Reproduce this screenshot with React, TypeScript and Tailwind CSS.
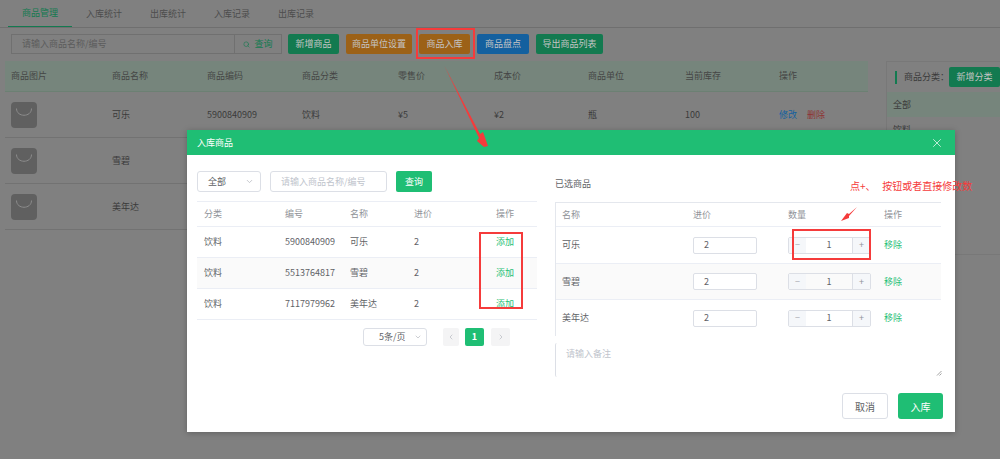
import React from 'react';
import { ChevronDown, ChevronLeft, ChevronRight, Search, X } from 'lucide-react';

const tabs = ['商品管理', '入库统计', '出库统计', '入库记录', '出库记录'];

const products = [
  { name: '可乐', code: '5900840909' },
  { name: '雪碧', code: '5513764817' },
  { name: '美年达', code: '7117979962' },
];

const pageCols = 'grid grid-cols-[101px_95px_95px_96px_96px_94px_97px_94px_1fr] items-center pl-[6px]';
const pickCols = 'grid grid-cols-[81px_65px_64px_82px_1fr] items-center pl-[7px]';
const chosenCols = 'grid grid-cols-[131px_95px_96px_1fr] items-center pl-[6px]';

const BagIcon = () => (
  <svg width="26" height="26" viewBox="0 0 26 26" className="shrink-0">
    <rect width="26" height="26" rx="4" fill="#606060" />
    <path d="M5.5 6.5c0 9 15 9 15 0" fill="none" stroke="#8c8c8c" strokeWidth="1" />
  </svg>
);

const PageBtn = ({ label, color, w }: { label: string; color: string; w: string }) => (
  <button className={`${color} ${w} h-5 rounded-[2px] text-[9px] text-[#c4c4c4]`}>{label}</button>
);

const Stepper = ({ value }: { value: number }) => (
  <div className="flex h-[17px] w-[83px] rounded-[2px] border border-[#dcdfe6] text-[9px] text-[#606266]">
    <span className="flex w-[17px] items-center justify-center bg-[#f5f7fa] text-[#a8abb2]">−</span>
    <span className="flex flex-1 items-center justify-center">{value}</span>
    <span className="flex w-[18px] items-center justify-center border-l border-[#dcdfe6] bg-[#f5f7fa] text-[#909399]">+</span>
  </div>
);

export default function App() {
  return (
    <div className="relative h-[459px] w-[1000px] overflow-hidden bg-[#808080] font-['Noto_Sans_CJK_SC','Liberation_Sans',sans-serif] text-[9px] text-[#3a3a3a]">
      {/* dimmed page */}
      <div className="flex h-[28px] border-b border-[#6f6f6f] pl-[8px]">
        {tabs.map((t, i) => (
          <div
            key={t}
            className={`flex h-[27px] w-[64px] items-center justify-center ${i === 0 ? 'border-b border-[#137a50] text-[#137a50]' : 'text-[#4d4d4d]'}`}
          >
            {t}
          </div>
        ))}
      </div>

      <div className="flex items-center pl-[11px] pt-[6px]">
        <div className="flex h-5 w-[224px] items-center border border-[#707070] pl-[10px] text-[#5c5c5c]">请输入商品名称/编号</div>
        <div className="flex h-5 w-[47px] items-center justify-center gap-1 border border-l-0 border-[#707070] text-[#137a50]">
          <Search size={7} />
          查询
        </div>
        <div className="ml-[6px] flex gap-[7px]">
          <PageBtn label="新增商品" color="bg-[#137a50]" w="w-[51px]" />
          <PageBtn label="商品单位设置" color="bg-[#9c6117]" w="w-[66px]" />
          <PageBtn label="商品入库" color="bg-[#9c6117]" w="w-[51px]" />
          <PageBtn label="商品盘点" color="bg-[#14609f]" w="w-[52px]" />
          <PageBtn label="导出商品列表" color="bg-[#137a50]" w="w-[67px]" />
        </div>
      </div>

      <div className="mt-[7px] flex pl-[5px]">
        <div className="w-[863px]">
          <div className={`${pageCols} h-[31px] border-b border-[#6c8073] bg-[#76857c] text-[#454545]`}>
            {['商品图片', '商品名称', '商品编码', '商品分类', '零售价', '成本价', '商品单位', '当前库存', '操作'].map((h) => (
              <span key={h}>{h}</span>
            ))}
          </div>
          {products.map((p) => (
            <div key={p.code} className={`${pageCols} h-[46px] border-b border-[#727272]`}>
              <BagIcon />
              <span>{p.name}</span>
              <span>{p.code}</span>
              <span>饮料</span>
              <span>¥5</span>
              <span>¥2</span>
              <span>瓶</span>
              <span>100</span>
              <span className="flex gap-[10px]">
                <span className="text-[#14609f]">修改</span>
                <span className="text-[#8f3333]">删除</span>
              </span>
            </div>
          ))}
        </div>

        <div className="ml-[18px] h-[194px] flex-1 border-l border-t border-b border-[#787878]">
          <div className="flex h-[30px] items-center pl-[8px]">
            <span className="h-[13px] w-[2px] bg-[#137a50]" />
            <span className="ml-[7px] flex-1 text-[#3a3a3a]">商品分类：</span>
            <span className="flex h-5 w-[51px] items-center justify-center rounded-[2px] bg-[#137a50] text-[#c4c4c4]">新增分类</span>
          </div>
          <div className="flex h-[25px] items-center bg-[#76857c] pl-[6px]">全部</div>
          <div className="flex h-[25px] items-center pl-[6px]">饮料</div>
        </div>
      </div>

      {/* dialog */}
      <div className="absolute left-[187px] top-[130px] flex h-[302px] w-[768px] flex-col bg-white text-[#606266] shadow-[0_1px_6px_rgba(0,0,0,0.25)]">
        <div className="flex h-[25px] shrink-0 items-center justify-between bg-[#1fbe74] pl-[10px] pr-[11px] text-white">
          入库商品
          <X size={14} strokeWidth={1.2} />
        </div>

        <div className="flex flex-1">
          <div className="ml-[10px] w-[340px]">
            <div className="mt-[16px] flex h-[21px] items-center">
              <div className="flex h-full w-[64px] items-center justify-between rounded-[3px] border border-[#dcdfe6] pl-[10px] pr-[6px] text-[#606266]">
                全部
                <ChevronDown size={9} className="text-[#b4b7bd]" />
              </div>
              <div className="ml-[9px] flex h-full w-[117px] items-center rounded-[3px] border border-[#dcdfe6] pl-[10px] text-[#c0c4cc]">请输入商品名称/编号</div>
              <button className="ml-[9px] h-full w-[36px] rounded-[2px] bg-[#1fbe74] text-[9px] text-white">查询</button>
            </div>

            <div className="mt-[9px] border-t border-[#ebeef5]">
              <div className={`${pickCols} h-[25px] border-b border-[#ebeef5] text-[#909399]`}>
                {['分类', '编号', '名称', '进价', '操作'].map((h) => (
                  <span key={h}>{h}</span>
                ))}
              </div>
              {products.map((p, i) => (
                <div key={p.code} className={`${pickCols} h-[31px] border-b border-[#ebeef5] ${i === 1 ? 'bg-[#fafafa]' : ''}`}>
                  <span>饮料</span>
                  <span>{p.code}</span>
                  <span>{p.name}</span>
                  <span>2</span>
                  <span className="text-[#1fbe74]">添加</span>
                </div>
              ))}
            </div>

            <div className="mt-[8px] flex h-[18px] items-center pl-[166px]">
              <div className="flex h-full w-[64px] items-center justify-between rounded-[3px] border border-[#dcdfe6] pl-[15px] pr-[4px]">
                5条/页
                <ChevronDown size={8} className="text-[#b4b7bd]" />
              </div>
              <span className="ml-[16px] flex h-full w-[16px] items-center justify-center rounded-[2px] bg-[#f4f4f5] text-[#b4b7bd]">
                <ChevronLeft size={8} />
              </span>
              <span className="ml-[6px] flex h-full w-[19px] items-center justify-center rounded-[2px] bg-[#1fbe74] font-bold text-white">1</span>
              <span className="ml-[7px] flex h-full w-[19px] items-center justify-center rounded-[2px] bg-[#f4f4f5] text-[#b4b7bd]">
                <ChevronRight size={8} />
              </span>
            </div>
          </div>

          <div className="ml-[18px] w-[388px]">
            <div className="mt-[22px] h-[25px] leading-[13px]">已选商品</div>
            <div className="w-[386px] border-l border-t border-[#e4e7ed]">
              <div className={`${chosenCols} h-[24px] border-b border-[#ebeef5] text-[#909399]`}>
                {['名称', '进价', '数量', '操作'].map((h) => (
                  <span key={h}>{h}</span>
                ))}
              </div>
              {products.map((p, i) => (
                <div
                  key={p.code}
                  className={`${chosenCols} ${i === 0 ? 'h-[37px]' : 'h-[36px]'} ${i < 2 ? 'border-b border-[#ebeef5]' : ''} ${i === 1 ? 'bg-[#fafafa]' : ''}`}
                >
                  <span>{p.name}</span>
                  <span className="flex h-[17px] w-[64px] items-center rounded-[2px] border border-[#dcdfe6] bg-white pl-[10px]">2</span>
                  <Stepper value={1} />
                  <span className="text-[#1fbe74]">移除</span>
                </div>
              ))}
            </div>
            <div className="relative mt-[7px] h-[34px] w-[388px] rounded-[2px] border-l border-[#dcdfe6] pl-[10px] pt-[4px] text-[#c0c4cc]">
              请输入备注
              <svg width="6" height="6" viewBox="0 0 6 6" className="absolute bottom-[1px] right-[1px]">
                <path d="M1 5.5 L5.5 1 M3.5 5.5 L5.5 3.5" stroke="#8a8a8a" strokeWidth="0.8" />
              </svg>
            </div>
            <div className="mt-[16px] flex gap-[10px] pl-[287px]">
              <button className="h-[26px] w-[46px] rounded-[3px] border border-[#dcdfe6] text-[10px] text-[#606266]">取消</button>
              <button className="h-[26px] w-[45px] rounded-[3px] bg-[#1fbe74] text-[10px] text-white">入库</button>
            </div>
          </div>
        </div>
      </div>

      {/* screenshot annotations */}
      <div className="absolute left-[416px] top-[28px] h-[31px] w-[59px] border-2 border-[#f53b3b]" />
      <div className="absolute left-[479px] top-[232px] h-[77px] w-[44px] border-2 border-[#f53b3b]" />
      <div className="absolute left-[792px] top-[229px] h-[31px] w-[79px] border-2 border-[#f53b3b]" />
      <div className="absolute left-[850px] top-[179px] text-[10px] leading-[14px] whitespace-pre text-[#f53b3b]">点+、   按钮或者直接修改数</div>
      <svg className="pointer-events-none absolute left-0 top-0" width="1000" height="459" viewBox="0 0 1000 459">
        <path d="M444.5 66 L480 134 L483 132 L488 146 L484 147 L477 141 L479 138 Z" fill="#f53b3b" />
        <path d="M857 207 L849 214 L847 213 L841 221 L849 218 L849 216 Z" fill="#f53b3b" />
      </svg>
    </div>
  );
}
